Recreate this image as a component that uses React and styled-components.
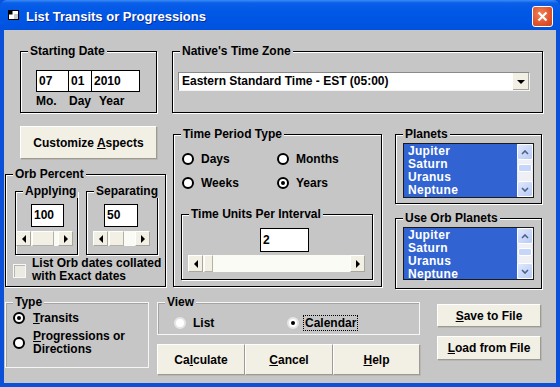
import React from "react";
import styled, { createGlobalStyle } from "styled-components";

const GRAY = "#c6c6c6";
const CREAM = "#f2efe4";

const GlobalStyle = createGlobalStyle`
  html, body {
    margin: 0;
    padding: 0;
    overflow: hidden;
    background: #0a52dc;
  }
  body {
    font-family: "Liberation Sans", Arial, sans-serif;
    font-size: 12px;
    font-weight: bold;
    color: #000;
  }
  u { text-decoration: underline; text-underline-offset: 1px; }
`;

const Window = styled.div`
  width: 560px;
  height: 387px;
  display: flex;
  flex-direction: column;
  background: #0a50d8;
  border-radius: 7px 7px 0 0;
  overflow: hidden;
`;

const TitleBar = styled.div`
  height: 30px;
  flex: none;
  display: flex;
  align-items: center;
  padding: 0 7px 0 8px;
  background: linear-gradient(#3a8cf6 0, #0a5ee8 3px, #0058e6 40%, #0052de 100%);
  color: #fff;
  font-size: 13px;
  text-shadow: 1px 1px 0 #0a2a9a;
`;

const TitleText = styled.span`
  margin-left: 6px;
  flex: 1;
  padding-top: 2px;
`;

const CloseBtn = styled.div`
  width: 21px;
  height: 21px;
  box-sizing: border-box;
  border: 1px solid #fff;
  border-radius: 3px;
  background: radial-gradient(circle at 40% 35%, #f0845a 0, #e0542c 60%, #c8401c 100%);
  display: flex;
  align-items: center;
  justify-content: center;
  margin-top: 2px;
`;

const Client = styled.div`
  flex: 1;
  margin: 0 4px 4px 4px;
  background: ${GRAY};
  display: flex;
  flex-direction: column;
`;

const Row = styled.div`
  display: flex;
  align-items: flex-start;
  flex: none;
  margin-top: ${({ $top }) => $top}px;
  height: ${({ $h }) => ($h ? `${$h}px` : "auto")};
`;

const Col = styled.div`
  display: flex;
  flex-direction: column;
  flex: none;
  width: ${({ $w }) => $w}px;
  margin-left: ${({ $left }) => $left || 0}px;
  margin-top: ${({ $top }) => $top || 0}px;
`;

/* group frames */
const Frame = styled.div`
  position: relative;
  box-sizing: border-box;
  flex: none;
  border: 1px solid #000;
  box-shadow: 1px 1px 0 #fff, inset 1px 1px 0 #fff;
`;

const LightFrame = styled(Frame)`
  border-color: #f6f6f6;
  box-shadow: inset 1px 1px 0 #a4a4a4;
`;

const Caption = styled.span`
  position: absolute;
  top: -8px;
  left: 7px;
  padding: 0 2px;
  background: ${GRAY};
  line-height: 14px;
  white-space: nowrap;
`;

const DateFrame = styled(Frame)`
  width: 137px;
  height: 62px;
  margin-left: 16px;
`;

const ZoneFrame = styled(Frame)`
  width: 371px;
  height: 62px;
  margin-left: 15px;
`;

const OrbFrame = styled(Frame)`
  width: 161px;
  height: 113px;
  margin-left: 1px;
  margin-top: 15px;
`;

const SubFrame = styled(Frame)`
  width: ${({ $w }) => $w}px;
  height: 64px;
  margin-left: ${({ $left }) => $left}px;
  display: flex;
  flex-direction: column;
`;

const PeriodFrame = styled(Frame)`
  width: 209px;
  height: 153px;
  margin-left: 8px;
  margin-top: 8px;
`;

const UnitsFrame = styled(Frame)`
  width: 192px;
  height: 66px;
  margin: 24px 0 0 7px;
  display: flex;
  flex-direction: column;
`;

const PlanetFrame = styled(Frame)`
  width: 147px;
  height: ${({ $h }) => $h}px;
  margin-top: ${({ $top }) => $top}px;
`;

const TypeFrame = styled(LightFrame)`
  width: 144px;
  height: 66px;
  margin-left: 1px;
  padding: 8px 0 0 7px;
`;

const ViewFrame = styled(LightFrame)`
  width: 263px;
  height: 33px;
  display: flex;
  padding: 8px 0 0 16px;
`;

/* inputs */
const DateBox = styled.div`
  display: flex;
  width: 104px;
  height: 22px;
  box-sizing: border-box;
  margin: 18px 0 0 15px;
  border: 1px solid #000;
  background: #fff;
`;

const DateCell = styled.div`
  width: ${({ $w }) => $w}px;
  box-sizing: border-box;
  padding-left: 2px;
  line-height: 20px;
  border-left: ${({ $first }) => ($first ? "none" : "1px solid #000")};
`;

const DateLabels = styled.div`
  display: flex;
  margin: 2px 0 0 15px;
  line-height: 14px;
`;

const DateLabel = styled.span`
  width: ${({ $w }) => ($w ? `${$w}px` : "auto")};
`;

const Combo = styled.div`
  display: flex;
  align-items: stretch;
  width: 352px;
  height: 19px;
  box-sizing: border-box;
  margin: 20px 0 0 5px;
  background: #fff;
  border-top: 1px solid #8a8a8a;
  border-left: 1px solid #8a8a8a;
  border-right: 1px solid #f4f4f4;
  border-bottom: 1px solid #f4f4f4;
`;

const ComboText = styled.div`
  flex: 1;
  padding-left: 3px;
  line-height: 17px;
`;

const DropBtn = styled.div`
  width: 16px;
  background: ${CREAM};
  border-left: 1px solid #fff;
  box-shadow: inset -1px -1px 0 #a8a49a;
  display: flex;
  align-items: center;
  justify-content: center;
`;

const TextBox = styled.div`
  width: ${({ $w }) => $w}px;
  height: ${({ $h }) => $h || 23}px;
  box-sizing: border-box;
  margin: ${({ $m }) => $m};
  border: 1px solid #000;
  background: #fff;
  padding-left: 2px;
  line-height: ${({ $h }) => ($h || 23) - 2}px;
`;

const Arrow = styled.span`
  width: 0;
  height: 0;
  border-top: ${({ $dir }) => ($dir === "down" ? "4px solid #000" : "4px solid transparent")};
  border-bottom: ${({ $dir }) => ($dir === "down" ? "none" : "4px solid transparent")};
  border-left: ${({ $dir }) =>
    $dir === "right" ? "4px solid #000" : $dir === "down" ? "4px solid transparent" : "none"};
  border-right: ${({ $dir }) =>
    $dir === "left" ? "4px solid #000" : $dir === "down" ? "4px solid transparent" : "none"};
`;

/* horizontal scroll bar */
const HBar = styled.div`
  display: flex;
  width: ${({ $w }) => $w}px;
  height: ${({ $h }) => $h || 15}px;
  margin: ${({ $m }) => $m};
  background: #fbfbf6;
`;

const HBtn = styled.div`
  width: 15px;
  flex: none;
  box-sizing: border-box;
  background: ${CREAM};
  border: 1px solid #fff;
  border-right-color: #a9a69c;
  border-bottom-color: #a9a69c;
  display: flex;
  align-items: center;
  justify-content: center;
`;

const HTrack = styled.div`
  flex: 1;
  display: flex;
`;

const HThumb = styled.div`
  width: ${({ $w }) => $w}px;
  margin-left: ${({ $offset }) => $offset}px;
  box-sizing: border-box;
  background: ${CREAM};
  border: 1px solid #fff;
  border-right-color: #b4b1a6;
  border-bottom-color: #b4b1a6;
`;

const HScroll = ({ w, h, m, offset, thumb }) => (
  <HBar $w={w} $h={h} $m={m}>
    <HBtn>
      <Arrow $dir="left" />
    </HBtn>
    <HTrack>
      <HThumb $w={thumb} $offset={offset} />
    </HTrack>
    <HBtn>
      <Arrow $dir="right" />
    </HBtn>
  </HBar>
);

/* radios & checkbox */
const RadioRow = styled.label`
  display: flex;
  align-items: center;
  line-height: 14px;
  width: ${({ $w }) => ($w ? `${$w}px` : "auto")};
  margin-top: ${({ $top }) => $top || 0}px;
`;

const Dot = styled.span`
  width: 12px;
  height: 12px;
  flex: none;
  box-sizing: border-box;
  border-radius: 50%;
  background: #fff;
  border: 2px solid ${({ $light }) => ($light ? "#e6e6e6" : "#000")};
  margin-right: ${({ $gap }) => $gap || 7}px;
  display: flex;
  align-items: center;
  justify-content: center;

  &::after {
    content: "";
    width: 4px;
    height: 4px;
    border-radius: 50%;
    background: ${({ $on }) => ($on ? "#000" : "transparent")};
  }
`;

const RadioGrid = styled.div`
  display: grid;
  grid-template-columns: 95px auto;
  row-gap: 10px;
  margin: 17px 0 0 8px;
`;

const Focus = styled.span`
  outline: 1px dotted #000;
  outline-offset: 0;
  padding: 0 1px;
`;

const CheckRow = styled.div`
  display: flex;
  align-items: flex-start;
  margin: 2px 0 0 7px;
`;

const CheckBox = styled.span`
  width: 13px;
  height: 14px;
  flex: none;
  box-sizing: border-box;
  margin-top: 7px;
  background: #ecebe2;
  border: 1px solid #f8f8f8;
  box-shadow: inset 1px 1px 0 #b8b6ae;
`;

const CheckText = styled.span`
  margin-left: 6px;
  line-height: 13px;
`;

/* buttons */
const Button = styled.div`
  box-sizing: border-box;
  width: ${({ $w }) => $w}px;
  height: ${({ $h }) => $h}px;
  margin: ${({ $m }) => $m || 0};
  flex: none;
  background: ${CREAM};
  border: 1px solid #fff;
  border-right-color: #9c9a92;
  border-bottom-color: #9c9a92;
  box-shadow: 1px 1px 0 #b8b8b0;
  display: flex;
  align-items: center;
  justify-content: center;
  white-space: nowrap;
`;

const ButtonRow = styled.div`
  display: flex;
  margin-top: 9px;
`;

/* list boxes */
const ListBox = styled.div`
  display: flex;
  width: 131px;
  height: ${({ $h }) => $h}px;
  box-sizing: border-box;
  margin: 8px 0 0 7px;
  border: 1px solid #1a1a1a;
  background: #3163d2;
`;

const Items = styled.div`
  flex: 1;
  padding: 1px 0 0 4px;
  color: #fff;
  line-height: 13px;
  letter-spacing: 0.3px;
`;

const VBar = styled.div`
  width: 16px;
  flex: none;
  display: flex;
  flex-direction: column;
  background: #eef0f6;
`;

const VBtn = styled.div`
  height: 16px;
  box-sizing: border-box;
  border: 1px solid #fff;
  border-radius: 2px;
  background: linear-gradient(135deg, #dfe8fe, #b8cbf4);
  display: flex;
  align-items: center;
  justify-content: center;
`;

const VTrack = styled.div`
  flex: 1;
  display: flex;
  flex-direction: column;
`;

const VThumb = styled.div`
  height: 6px;
  margin: 4px 1px 0;
  border-radius: 2px;
  background: #c6d6fa;
  border: 1px solid #fff;
`;

const Chevron = ({ up }) => (
  <svg width="8" height="5" viewBox="0 0 8 5">
    <polyline
      points={up ? "1,4 4,1 7,4" : "1,1 4,4 7,1"}
      fill="none"
      stroke="#4d6185"
      strokeWidth="1.6"
    />
  </svg>
);

const List = ({ h }) => (
  <ListBox $h={h}>
    <Items>
      <div>Jupiter</div>
      <div>Saturn</div>
      <div>Uranus</div>
      <div>Neptune</div>
    </Items>
    <VBar>
      <VBtn>
        <Chevron up />
      </VBtn>
      <VTrack>
        <VThumb />
      </VTrack>
      <VBtn>
        <Chevron />
      </VBtn>
    </VBar>
  </ListBox>
);

const AppIcon = () => (
  <svg width="12" height="11" viewBox="0 0 12 11">
    <rect x="0.5" y="0.5" width="10" height="9" fill="#fff" stroke="#000" />
    <rect x="0.5" y="0.5" width="4" height="4" fill="#000" />
    <rect x="6" y="4" width="4" height="5" fill="#c8c8c8" />
  </svg>
);

export default function App() {
  return (
    <>
      <GlobalStyle />
      <Window>
        <TitleBar>
          <AppIcon />
          <TitleText>List Transits or Progressions</TitleText>
          <CloseBtn>
            <svg width="11" height="11" viewBox="0 0 11 11">
              <path d="M1.5 1.5 L9.5 9.5 M9.5 1.5 L1.5 9.5" stroke="#fff" strokeWidth="2.2" />
            </svg>
          </CloseBtn>
        </TitleBar>
        <Client>
          <Row $top={21}>
            <DateFrame>
              <Caption>Starting Date</Caption>
              <DateBox>
                <DateCell $w={31} $first>
                  07
                </DateCell>
                <DateCell $w={23}>01</DateCell>
                <DateCell $w={48}>2010</DateCell>
              </DateBox>
              <DateLabels>
                <DateLabel $w={33}>Mo.</DateLabel>
                <DateLabel $w={30}>Day</DateLabel>
                <DateLabel>Year</DateLabel>
              </DateLabels>
            </DateFrame>
            <ZoneFrame>
              <Caption>Native's Time Zone</Caption>
              <Combo>
                <ComboText>Eastern Standard Time - EST (05:00)</ComboText>
                <DropBtn>
                  <Arrow $dir="down" />
                </DropBtn>
              </Combo>
            </ZoneFrame>
          </Row>

          <Row $top={13} $h={162}>
            <Col $w={161}>
              <Button $w={137} $h={33} $m="0 0 0 16px">
                <span>
                  Customize <u>A</u>spects
                </span>
              </Button>
              <OrbFrame>
                <Caption>Orb Percent</Caption>
                <Row $top={16}>
                  <SubFrame $w={63} $left={9}>
                    <Caption>Applying</Caption>
                    <TextBox $w={33} $m="12px 0 0 15px">
                      100
                    </TextBox>
                    <HScroll w={57} m="4px 0 0 0" offset={1} thumb={22} />
                  </SubFrame>
                  <SubFrame $w={72} $left={8}>
                    <Caption>Separating</Caption>
                    <TextBox $w={34} $m="12px 0 0 17px">
                      50
                    </TextBox>
                    <HScroll w={57} m="4px 0 0 6px" offset={1} thumb={15} />
                  </SubFrame>
                </Row>
                <CheckRow>
                  <CheckBox />
                  <CheckText>
                    List Orb dates collated
                    <br />
                    with Exact dates
                  </CheckText>
                </CheckRow>
              </OrbFrame>
            </Col>

            <PeriodFrame>
              <Caption>Time Period Type</Caption>
              <RadioGrid>
                <RadioRow>
                  <Dot />
                  Days
                </RadioRow>
                <RadioRow>
                  <Dot />
                  Months
                </RadioRow>
                <RadioRow>
                  <Dot />
                  Weeks
                </RadioRow>
                <RadioRow>
                  <Dot $on />
                  Years
                </RadioRow>
              </RadioGrid>
              <UnitsFrame>
                <Caption>Time Units Per Interval</Caption>
                <TextBox $w={49} $h={24} $m="13px 0 0 78px">
                  2
                </TextBox>
                <HScroll w={177} h={17} m="3px 0 0 6px" offset={1} thumb={9} />
              </UnitsFrame>
            </PeriodFrame>

            <Col $w={147} $left={13}>
              <PlanetFrame $h={70} $top={8}>
                <Caption>Planets</Caption>
                <List h={55} />
              </PlanetFrame>
              <PlanetFrame $h={71} $top={14}>
                <Caption>Use Orb Planets</Caption>
                <List h={53} />
              </PlanetFrame>
            </Col>
          </Row>

          <Row $top={14}>
            <TypeFrame>
              <Caption>Type</Caption>
              <RadioRow>
                <Dot $on $gap={8} />
                <span>
                  <u>T</u>ransits
                </span>
              </RadioRow>
              <RadioRow $top={5}>
                <Dot $gap={8} />
                <CheckText style={{ marginLeft: 0 }}>
                  <u>P</u>rogressions or
                  <br />
                  Directions
                </CheckText>
              </RadioRow>
            </TypeFrame>

            <Col $w={263} $left={8}>
              <ViewFrame>
                <Caption>View</Caption>
                <RadioRow $w={113}>
                  <Dot $light />
                  List
                </RadioRow>
                <RadioRow>
                  <Dot $light $on $gap={5} />
                  <Focus>Calendar</Focus>
                </RadioRow>
              </ViewFrame>
              <ButtonRow>
                <Button $w={88} $h={31}>
                  <span>
                    Ca<u>l</u>culate
                  </span>
                </Button>
                <Button $w={88} $h={31}>
                  <span>
                    <u>C</u>ancel
                  </span>
                </Button>
                <Button $w={87} $h={31}>
                  <span>
                    <u>H</u>elp
                  </span>
                </Button>
              </ButtonRow>
            </Col>

            <Col $w={104} $left={17} $top={2}>
              <Button $w={104} $h={23}>
                <span>
                  <u>S</u>ave to File
                </span>
              </Button>
              <Button $w={104} $h={24} $m="9px 0 0 0">
                <span>
                  <u>L</u>oad from File
                </span>
              </Button>
            </Col>
          </Row>
        </Client>
      </Window>
    </>
  );
}
